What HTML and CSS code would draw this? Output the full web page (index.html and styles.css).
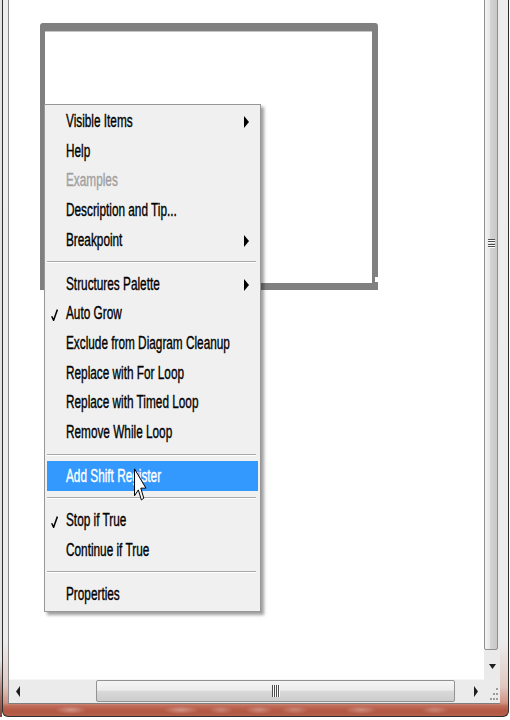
FILE: index.html
```html
<!DOCTYPE html>
<html>
<head>
<meta charset="utf-8">
<title>While Loop context menu</title>
<link rel="stylesheet" href="styles.css">
</head>
<body>
<div class="chrome">
  <div class="client">
    <div class="canvas">
      <div class="loop"><span class="loop-notch"></span></div>

      <div class="menu">
        <div class="item"><span class="label">Visible Items</span><svg class="sub" viewBox="0 0 5 12"><polygon points="0,0 5,6 0,12"/></svg></div>
        <div class="item"><span class="label">Help</span></div>
        <div class="item disabled"><span class="label">Examples</span></div>
        <div class="item"><span class="label">Description and Tip...</span></div>
        <div class="item"><span class="label">Breakpoint</span><svg class="sub" viewBox="0 0 5 12"><polygon points="0,0 5,6 0,12"/></svg></div>
        <div class="sep"></div>
        <div class="item"><span class="label">Structures Palette</span><svg class="sub" viewBox="0 0 5 12"><polygon points="0,0 5,6 0,12"/></svg></div>
        <div class="item"><svg class="check" viewBox="0 0 7 12"><path d="M0.7 7.2 L2.6 11.3 L6.4 0.6"/></svg><span class="label">Auto Grow</span></div>
        <div class="item"><span class="label">Exclude from Diagram Cleanup</span></div>
        <div class="item"><span class="label">Replace with For Loop</span></div>
        <div class="item"><span class="label">Replace with Timed Loop</span></div>
        <div class="item"><span class="label">Remove While Loop</span></div>
        <div class="sep"></div>
        <div class="item active"><span class="label">Add Shift Register</span></div>
        <div class="sep"></div>
        <div class="item"><svg class="check" viewBox="0 0 7 12"><path d="M0.7 7.2 L2.6 11.3 L6.4 0.6"/></svg><span class="label">Stop if True</span></div>
        <div class="item"><span class="label">Continue if True</span></div>
        <div class="sep"></div>
        <div class="item"><span class="label">Properties</span></div>
      </div>

      <svg class="cursor" viewBox="0 0 12 19" preserveAspectRatio="none"><path d="M0.5 0.5 L0.5 16 L4 12.6 L6.8 18.4 L9 17.4 L6.3 11.6 L11 11.6 Z"/></svg>
    </div>

    <div class="vscroll">
      <div class="vthumb"><span class="vgrip"><i></i><i></i><i></i><i></i></span></div>
      <div class="vbtn"><svg class="arrow-down" viewBox="0 0 7 5"><polygon points="0,0 7,0 3.5,5"/></svg></div>
    </div>

    <div class="hscroll">
      <div class="hbtn"><svg class="arrow-h" viewBox="0 0 4 11"><polygon points="4,0 0,5.5 4,11"/></svg></div>
      <div class="hthumb"><span class="hgrip"><i></i><i></i><i></i><i></i></span></div>
      <div class="hbtn hbtn-right"><svg class="arrow-h" viewBox="0 0 4 11"><polygon points="0,0 4,5.5 0,11"/></svg></div>
    </div>

    <div class="corner">
      <svg class="sizegrip" viewBox="0 0 9 14">
        <rect x="6" y="0" width="2" height="2"/>
        <rect x="3" y="5" width="2" height="2"/>
        <rect x="6" y="5" width="2" height="2"/>
        <rect x="0" y="10" width="2" height="2"/>
        <rect x="3" y="10" width="2" height="2"/>
        <rect x="6" y="10" width="2" height="2"/>
      </svg>
    </div>
  </div>
</div>
</body>
</html>
```

FILE: styles.css
```css
* {
  box-sizing: border-box;
}

html,
body {
  margin: 0;
  padding: 0;
}

body {
  width: 510px;
  height: 720px;
  overflow: hidden;
  padding-left: 2px;
  background:
    linear-gradient(to bottom, #e2e2e2 0, #e2e2e2 660px, #a0685c 700px, #7c463c 717px, #ffffff 717px) left top / 2px 720px no-repeat,
    #ffffff;
  font-family: "Liberation Sans", Arial, sans-serif;
}

/* ---------- window chrome ---------- */
.chrome {
  width: 507px;
  height: 717px;
  border: 1px solid #2e2e2e;
  border-top: none;
  border-radius: 0 0 6px 6px;
  padding: 0 8px 12px 5px;
  background:
    radial-gradient(ellipse 16px 4px at 68px 710px, rgba(255, 235, 228, 0.4), rgba(255, 255, 255, 0)),
    radial-gradient(ellipse 18px 4px at 178px 710px, rgba(255, 235, 228, 0.4), rgba(255, 255, 255, 0)),
    radial-gradient(ellipse 12px 4px at 218px 710px, rgba(255, 235, 228, 0.3), rgba(255, 255, 255, 0)),
    radial-gradient(ellipse 14px 4px at 256px 710px, rgba(255, 235, 228, 0.35), rgba(255, 255, 255, 0)),
    radial-gradient(ellipse 14px 4px at 292px 710px, rgba(255, 235, 228, 0.3), rgba(255, 255, 255, 0)),
    radial-gradient(ellipse 16px 4px at 358px 710px, rgba(255, 235, 228, 0.35), rgba(255, 255, 255, 0)),
    radial-gradient(ellipse 14px 4px at 432px 710px, rgba(255, 235, 228, 0.3), rgba(255, 255, 255, 0)),
    linear-gradient(to bottom, #ededed 0, #ececec 640px, #e0c8c1 686px, #d09282 703px, #bf6b58 706px, #b25743 711px, #b4604d 716px);
}

.client {
  display: grid;
  grid-template-columns: 475px 16px;
  grid-template-rows: 679px 24px;
  width: 492px;
  height: 704px;
  border-left: 1px solid #8a8a8a;
  border-bottom: 1px solid #7e7e7e;
}

/* ---------- canvas ---------- */
.canvas {
  position: relative;
  overflow: hidden;
  background: #ffffff;
}

.loop {
  position: absolute;
  left: 31px;
  top: 23px;
  width: 338px;
  height: 267px;
  border-style: solid;
  border-color: #808080;
  border-width: 8px 6px 7px 5px;
  border-radius: 3px 3px 0 0;
  box-shadow: inset 0 1px 0 #c4c4c4;
}

.loop-notch {
  position: absolute;
  left: 330px;
  top: 246px;
  width: 3px;
  height: 5px;
  background: #ffffff;
}

/* ---------- context menu ---------- */
.menu {
  position: absolute;
  left: 35px;
  top: 104px;
  width: 217px;
  padding: 1px 2px 2px;
  border: 1px solid #979797;
  background: #f0f0f0;
  box-shadow: 3px 3px 3px rgba(0, 0, 0, 0.38);
}

.item {
  position: relative;
  display: flex;
  align-items: center;
  height: 29.7px;
  padding-left: 19px;
  font-size: 11.8px;
  color: #000000;
}

.label {
  display: inline-block;
  white-space: nowrap;
  transform: scaleY(1.48);
  -webkit-text-stroke: 0.25px currentColor;
}

.item.disabled {
  color: #a0a0a0;
}

.item.active {
  background: #3399ff;
  color: #ffffff;
}

.sep {
  display: flex;
  align-items: center;
  height: 14.3px;
  margin-right: 2px;
}

.sep::before {
  content: "";
  flex: 1;
  height: 1px;
  background: #a9a9a9;
  box-shadow: 0 1px 0 #ffffff;
}

.check {
  position: absolute;
  left: 4px;
  top: calc(50% - 4px);
  width: 7px;
  height: 12px;
  fill: none;
  stroke: #000000;
  stroke-width: 1.5;
}

.sub {
  position: absolute;
  right: 9px;
  top: calc(50% - 5px);
  width: 5px;
  height: 12px;
  fill: #000000;
}

.cursor {
  position: absolute;
  left: 124.5px;
  top: 467.5px;
  width: 13px;
  height: 33px;
  fill: #ffffff;
  stroke: #000000;
  stroke-width: 1;
}

.cursor path {
  vector-effect: non-scaling-stroke;
}

/* ---------- vertical scrollbar ---------- */
.vscroll {
  display: flex;
  flex-direction: column;
  background: #eaeaea;
}

.vthumb {
  flex: none;
  width: 14px;
  height: 814px;
  margin-top: -164px;
  border: 1px solid #8f8f8f;
  border-radius: 2px;
  background: linear-gradient(to right, #f4f4f4, #e6e6e6 38%, #d3d3d3 46%, #c8c8c8);
  display: flex;
  align-items: center;
  justify-content: center;
}

.vgrip {
  display: flex;
  flex-direction: column;
  gap: 1.6px;
  width: 7px;
}

.vgrip i {
  display: block;
  height: 1px;
  background: #4e4e4e;
  box-shadow: 0 1px 0 #fafafa;
}

.vbtn {
  flex: 1;
  display: flex;
  align-items: center;
  justify-content: center;
  padding-top: 3px;
}

.arrow-down {
  width: 7px;
  height: 5px;
  fill: #1e1e1e;
}

/* ---------- horizontal scrollbar ---------- */
.hscroll {
  display: flex;
  align-items: flex-start;
  background: #ebebeb;
  border-top: 1px solid #f6f6f6;
}

.hbtn {
  flex: none;
  width: 17px;
  height: 23px;
  display: flex;
  align-items: center;
  justify-content: center;
}

.hbtn-right {
  margin-left: auto;
}

.arrow-h {
  width: 4px;
  height: 11px;
  fill: #1e1e1e;
}

.hthumb {
  flex: none;
  width: 359px;
  height: 22px;
  margin-left: 70px;
  border: 1px solid #929292;
  border-radius: 2px;
  background: linear-gradient(#f5f5f5, #ececec 45%, #d9d9d9 52%, #cccccc);
  display: flex;
  align-items: center;
  justify-content: center;
}

.hgrip {
  display: flex;
  gap: 1px;
  height: 12px;
}

.hgrip i {
  display: block;
  width: 1px;
  background: #4e4e4e;
  box-shadow: 1px 0 0 #fafafa;
}

/* ---------- corner ---------- */
.corner {
  background: #ebebeb;
  padding: 9px 0 0 6px;
}

.sizegrip {
  display: block;
  width: 9px;
  height: 14px;
  fill: #9c9c9c;
}
```
